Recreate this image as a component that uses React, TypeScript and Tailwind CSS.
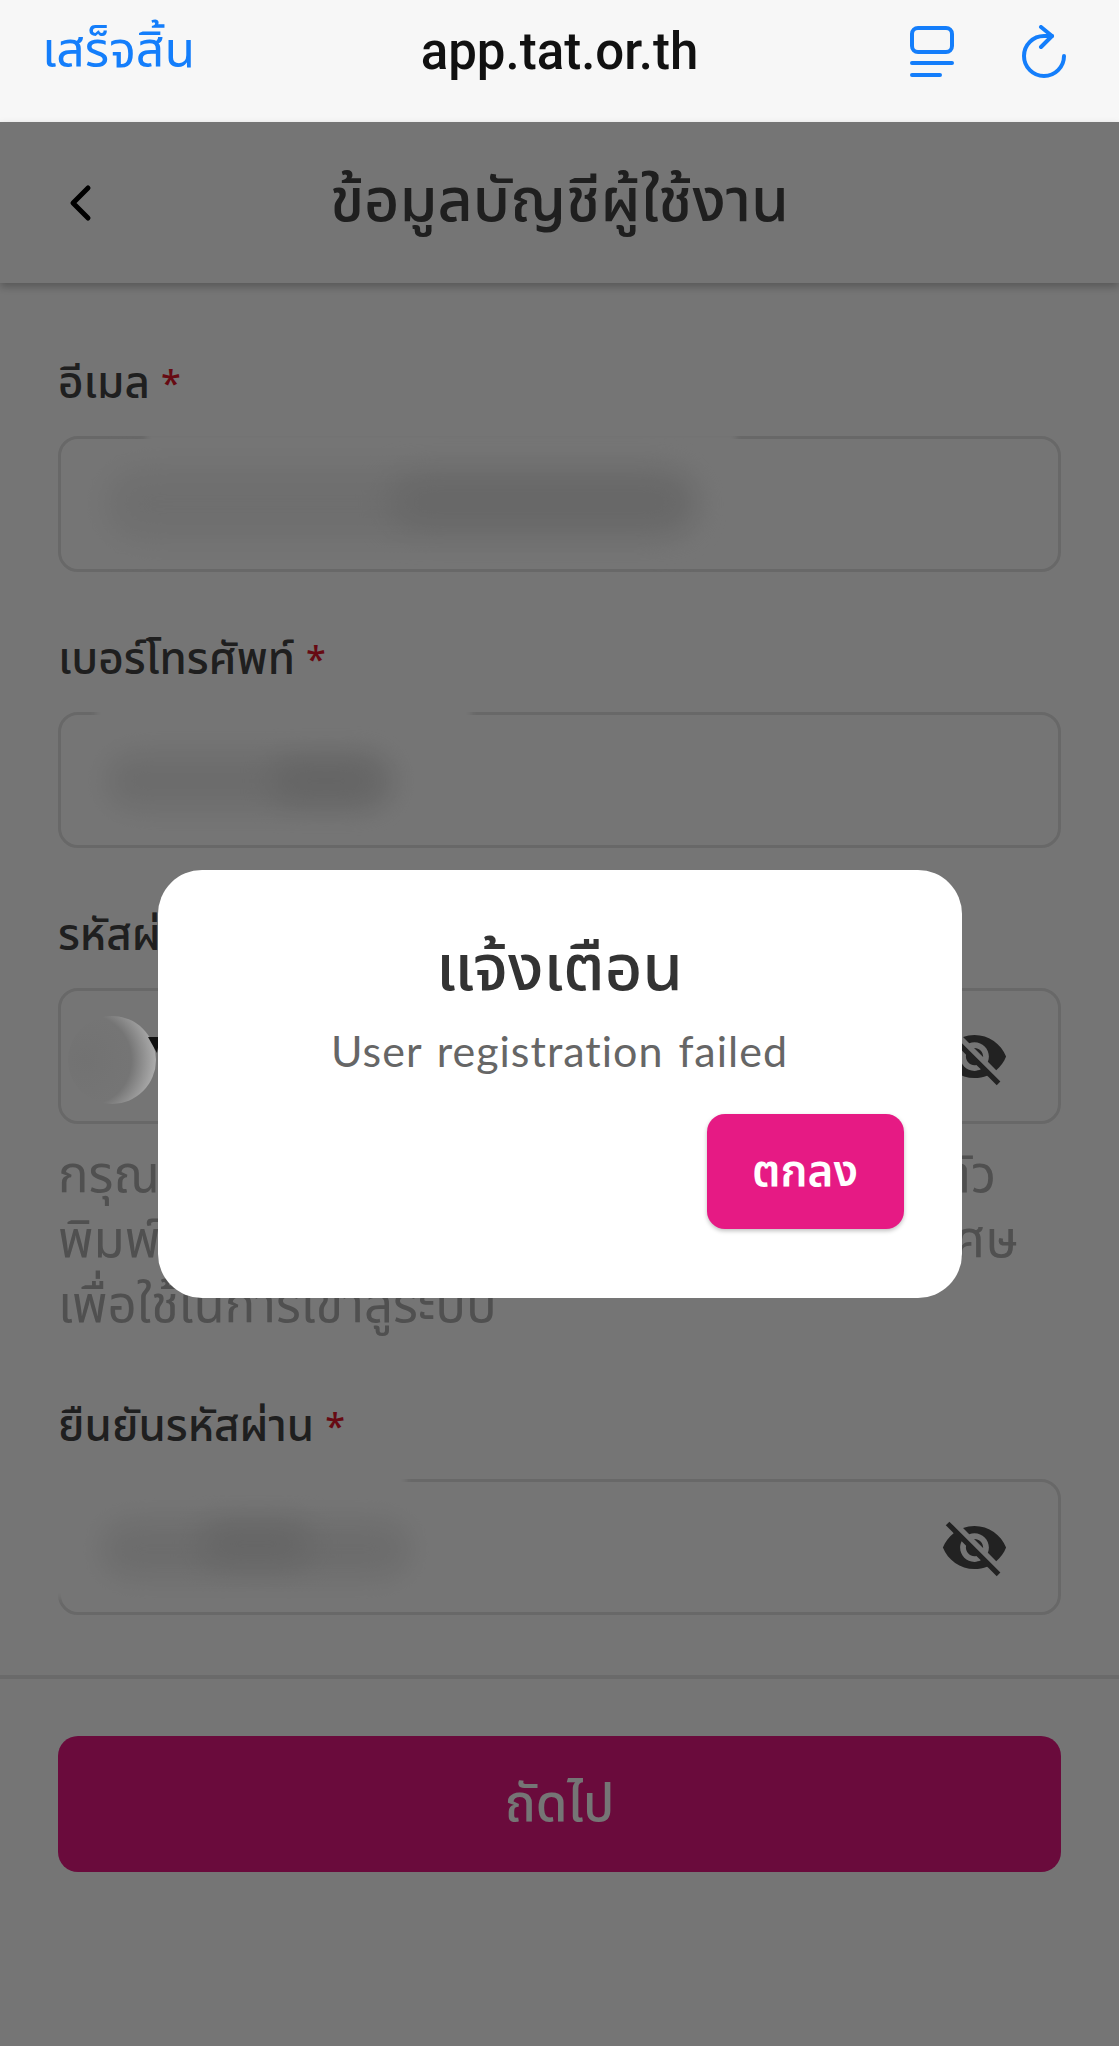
import React from 'react';

const thai = "font-['Noto_Sans_Thai','Noto_Sans','Liberation_Sans',sans-serif]";

const ReaderIcon = () => (
  <svg width="46" height="56" viewBox="0 0 46 56" fill="none" stroke="#147efb" strokeWidth="4" strokeLinecap="round">
    <rect x="3" y="3" width="40" height="24" rx="6" />
    <path d="M3 38h40M3 50h28" />
  </svg>
);

const ReloadIcon = () => (
  <svg width="48" height="56" viewBox="0 0 48 56" fill="none" stroke="#147efb" strokeWidth="4" strokeLinecap="round" strokeLinejoin="round">
    <path d="M43 31a20 20 0 1 1-20-20h8" />
    <path d="M20 2l11 9-11 11" />
  </svg>
);

const ChevronLeft = () => (
  <svg width="24" height="38" viewBox="0 0 24 38" fill="none" stroke="#000" strokeWidth="5" strokeLinecap="round" strokeLinejoin="round">
    <path d="M20 4L5 19l15 15" />
  </svg>
);

const EyeOff = () => (
  <svg width="69" height="69" viewBox="0 0 24 24" fill="#4b4b4b">
    <path d="M12 7c2.76 0 5 2.24 5 5 0 .65-.13 1.26-.36 1.83l2.92 2.92c1.51-1.26 2.7-2.89 3.43-4.75-1.73-4.39-6-7.5-11-7.5-1.4 0-2.74.25-3.98.7l2.16 2.16C10.74 7.13 11.35 7 12 7zM2 4.27l2.28 2.28.46.46C3.08 8.3 1.78 10.02 1 12c1.73 4.39 6 7.5 11 7.5 1.55 0 3.03-.3 4.38-.84l.42.42L19.73 22 21 20.73 3.27 3 2 4.27zM7.53 9.8l1.55 1.55c-.05.21-.08.43-.08.65 0 1.66 1.34 3 3 3 .22 0 .44-.03.65-.08l1.55 1.55c-.67.33-1.41.53-2.2.53-2.76 0-5-2.24-5-5 0-.79.2-1.53.53-2.2zm4.31-.78l3.15 3.15.02-.16c0-1.66-1.34-3-3-3l-.17.01z" />
  </svg>
);

const Label = ({ text }: { text: string }) => (
  <div className="h-[44px] mb-[30px] flex items-center text-[44px] font-medium text-[#444] leading-[44px] pt-[2px]">
    {text}
    <span className="ml-[11px] text-[36px] text-[#e0162b]">*</span>
  </div>
);

const Field = ({ children }: { children?: React.ReactNode }) => (
  <div className="relative h-[136px] rounded-[20px] border-[3px] border-[#e2e2e2] bg-white flex items-center justify-end pr-[49px]">
    {children}
  </div>
);

export default function App() {
  return (
    <div className={`relative h-[2048px] w-full overflow-hidden bg-white ${thai}`}>
      {/* safari bar */}
      <div className="h-[122px] bg-[#f7f7f7] grid grid-cols-[1fr_auto_1fr] items-start px-[42px] pt-[24px]">
        <span className="text-[#147efb] text-[50px] leading-[56px]">เสร็จสิ้น</span>
        <span className="text-[51px] leading-[56px] font-medium text-[#111] font-['Roboto',sans-serif]">
          app.tat.or.th
        </span>
        <div className="flex justify-end gap-[66px] pr-[8px] pt-[1px]">
          <ReaderIcon />
          <ReloadIcon />
        </div>
      </div>

      {/* page header */}
      <div className="h-[161px] shadow-[0_4px_8px_rgba(0,0,0,0.25)] grid grid-cols-[1fr_auto_1fr] items-center pl-[68px]">
        <ChevronLeft />
        <span className="text-[61px] font-medium text-[#444] -ml-[68px]">ข้อมูลบัญชีผู้ใช้งาน</span>
      </div>

      {/* form */}
      <div className="px-[58px] pt-[79px] h-[1392px]">
        <Label text="อีเมล" />
        <Field>
          <div className="absolute left-[85px] -top-[6px] w-[590px] h-[100px] bg-white blur-[3px]" />
          <div className="absolute left-[45px] top-[30px] w-[590px] h-[70px] rounded-full bg-[#f0f0f0] blur-[16px]" />
          <div className="absolute left-[330px] top-[38px] w-[300px] h-[50px] rounded-full bg-[#e0e0e0] blur-[16px]" />
        </Field>

        <div className="mt-[66px]">
          <Label text="เบอร์โทรศัพท์" />
          <Field>
            <div className="absolute left-[35px] -top-[12px] w-[375px] h-[120px] bg-white blur-[3px]" />
            <div className="absolute left-[45px] top-[38px] w-[290px] h-[56px] rounded-full bg-[#ebebeb] blur-[14px]" />
            <div className="absolute left-[210px] top-[44px] w-[110px] h-[44px] rounded-full bg-[#dcdcdc] blur-[14px]" />
          </Field>
        </div>

        <div className="mt-[66px]">
          <Label text="รหัสผ่าน" />
          <Field><EyeOff /></Field>
          <p className="mt-[20px] text-[51px] leading-[65px] text-[#aeaeae]">
            <span className="block whitespace-nowrap">กรุณากรอกรหัสผ่านอย่างน้อย 8 ตัวอักษร มีตัว</span>
            <span className="block whitespace-nowrap">พิมพ์พิมพ์ใหญ่ พิมพ์เล็ก ตัวเลข และอักขระพิเศษ</span>
            <span className="block whitespace-nowrap">เพื่อใช้ในการเข้าสู่ระบบ</span>
          </p>
        </div>

        <div className="mt-[66px]">
          <Label text="ยืนยันรหัสผ่าน" />
          <Field>
            <div className="absolute -left-[20px] -top-[12px] w-[365px] h-[128px] bg-white blur-[3px]" />
            <div className="absolute left-[40px] top-[38px] w-[310px] h-[58px] rounded-full bg-[#ececec] blur-[14px]" />
            <div className="absolute left-[140px] top-[40px] w-[110px] h-[44px] rounded-full bg-[#dedede] blur-[14px]" />
            <EyeOff />
          </Field>
        </div>
      </div>

      {/* bottom action */}
      <div className="h-[373px] border-t-[4px] border-[#e6e6e6] px-[58px] pt-[57px]">
        <button className="w-full h-[136px] rounded-[20px] bg-[#e61a84] text-white text-[51px] font-medium pt-[4px]">
          ถัดไป
        </button>
      </div>

      {/* dim + alert */}
      <div className="absolute inset-x-0 top-[122px] bottom-[2px] bg-black/[.54] flex items-center justify-center">
        <div className="absolute left-[68px] top-[894px] w-[88px] h-[88px] rounded-full bg-[radial-gradient(circle_at_20%_50%,#727272_0%,#757575_55%,#c8c8c8_100%)]" />
        <svg className="absolute left-[148px] top-[915px]" width="12" height="16" viewBox="0 0 12 16" fill="#111">
          <path d="M0 0h12l-3 16z" />
        </svg>
        <div className="relative w-[804px] h-[428px] rounded-[44px] bg-white px-[58px] pt-[58px]">
          <h2 className="text-center text-[65px] leading-[84px] font-medium text-[#333]">แจ้งเตือน</h2>
          <p className="mt-[11px] text-center text-[43px] leading-[56px] tracking-[1px] [word-spacing:3px] text-[#666] font-['Lato',sans-serif]">
            User registration failed
          </p>
          <div className="mt-[35px] flex justify-end">
            <button className="w-[197px] h-[115px] rounded-[18px] bg-[#e61a84] text-white text-[44px] font-semibold pt-[3px] shadow-[0_2px_4px_rgba(0,0,0,0.25)]">
              ตกลง
            </button>
          </div>
        </div>
      </div>
    </div>
  );
}
